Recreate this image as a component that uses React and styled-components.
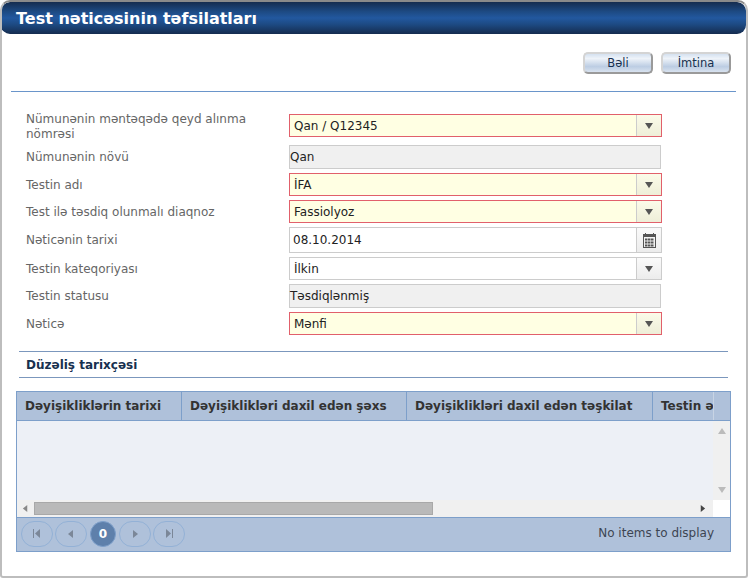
import React from "react";
import styled, { createGlobalStyle } from "styled-components";

const Global = createGlobalStyle`
  html, body { margin: 0; padding: 0; background: #fff; }
  body { font-family: "DejaVu Sans", Verdana, sans-serif; }
`;
const Win = styled.div`
  width: 748px; height: 578px; box-sizing: border-box; background: #fff;
  border-left: 2px solid #bdbdbd; border-right: 2px solid #bdbdbd; border-bottom: 2px solid #bdbdbd;
  border-top: 2px solid #8a8a8a; border-radius: 10px 10px 3px 3px; overflow: hidden; display: flex; flex-direction: column;
`;
const Title = styled.div`
  height: 32px; flex: none; margin: 0 0 0 -1px; padding-left: 15px; display: flex; align-items: center; color: #fff;
  font-size: 16px; font-weight: bold; border-radius: 9px;
  background: linear-gradient(#152c4f 0%, #1d4a83 30%, #22589f 50%, #1d4a83 70%, #152c4f 100%);
`;
const Actions = styled.div`
  display: flex; justify-content: flex-end; gap: 8px; padding: 18px 15px 0 0; height: 24px; flex: none;
`;
const Btn = styled.button`
  width: 70px; height: 22px; padding: 0; border: 2px solid #d4d4d4; border-right-color: #9a9a9a; border-bottom-color: #9a9a9a; border-radius: 5px;
  background: linear-gradient(#d5e1f0 0%, #eef3f9 25%, #bccde3 70%, #d8e2ef 100%);
  color: #17304f; font: 11.5px "DejaVu Sans", sans-serif;
`;
const Rule = styled.div`
  height: 1px; flex: none; margin: 15px 10px 0 9px; background: #6a95ca;
`;
const Form = styled.div`
  display: grid; grid-template-columns: 263px 373px; margin: 18px 0 0 24px; row-gap: 4px; align-items: center; flex: none;
`;
const Label = styled.div`
  font-size: 12px; line-height: 15px; color: #666; padding-right: 4px;
  ${p => p.$multi ? "padding-top: 2px; margin-bottom: -1px;" : "position: relative; top: 0.5px;"}
`;
const Field = styled.div`
  height: ${p => p.$h || 23}px; box-sizing: border-box; display: flex; align-items: stretch;
  width: ${p => p.$ro ? 372 : 373}px;
  border: 1px solid ${p => p.$req ? "#e1606b" : "#ccc"};
  background: ${p => p.$ro ? "#f0f0f0" : p.$req ? "#ffffe3" : "#fff"};
  font-size: 12px; color: #222;
  ${p => p.$first && "align-self: start; margin-top: 4px;"}
`;
const Val = styled.div`
  flex: 1; display: flex; align-items: center; padding-left: ${p => p.$pad ?? 4}px;
`;
const Arrow = styled.div`
  width: 24px; display: flex; align-items: center; justify-content: center;
  border-left: 1px solid #ccc;
  background: ${p => p.$req ? "linear-gradient(#fbfbe9,#eeeed8)" : "linear-gradient(#fafafa,#ececec)"};
`;
const Section = styled.div`
  margin: 16px 18px 0 17px; height: 27px; flex: none; border-top: 1px solid #7b97bd; border-bottom: 1px solid #7b97bd;
  display: flex; align-items: center; padding-left: 7px; box-sizing: border-box; color: #17304f; font-size: 12px; font-weight: bold;
`;
const Grid = styled.div`
  margin: 13px 0 0 14px; width: 715px; height: 161px; box-sizing: border-box; border: 1px solid #7d9fca; flex: none;
  display: flex; flex-direction: column; overflow: hidden;
`;
const Head = styled.div`
  height: 29px; flex: none; box-sizing: border-box; display: flex; background: #afc1da; border-bottom: 1px solid #7d9fca; font-size: 12px; font-weight: bold; color: #333;
`;
const HCell = styled.div`
  width: ${p => p.$w}px; flex: none; box-sizing: border-box; padding-left: 8px; display: flex; align-items: center; white-space: nowrap; overflow: hidden;
  border-right: 1px solid ${p => p.$light ? "#c8d4e4" : "#7d9fca"};
`;
const Body = styled.div`
  flex: 1; display: flex; min-height: 0;
`;
const Left = styled.div`
  flex: 1; display: flex; flex-direction: column;
`;
const Rows = styled.div`
  flex: 1; background: #edf0f6;
`;
const HBar = styled.div`
  height: 17px; flex: none; background: #f0f0f0; display: flex; align-items: center; padding: 0 7px 0 5px; box-sizing: border-box;
`;
const Thumb = styled.div`
  width: 399px; height: 13px; background: #b9b9b9; box-sizing: border-box; border: 1px solid #a8a8a8; margin-left: 5px; margin-right: auto;
`;
const VBar = styled.div`
  width: 17px; flex: none; display: flex; flex-direction: column;
`;
const VTrack = styled.div`
  height: 79px; background: #f0f0f0; display: flex; flex-direction: column; justify-content: space-between; align-items: center; padding: 6px 0; box-sizing: border-box;
`;
const Pager = styled.div`
  height: 34px; flex: none; background: #afc1da; border-top: 1px solid #7d9fca; display: flex; align-items: center; padding: 0 0 2px 4px; gap: 2px; box-sizing: border-box;
`;
const PBtn = styled.div`
  width: 32px; height: 26px; box-sizing: border-box; border: 1px solid #93b1d6; border-radius: 13px; display: flex; align-items: center; justify-content: center;
`;
const PNum = styled.div`
  width: 26px; height: 26px; border-radius: 50%; background: #5e80ab; border: 1px solid #7d9fca; box-sizing: border-box; color: #fff; font-size: 12px; font-weight: bold;
  display: flex; align-items: center; justify-content: center; margin: 0 1px;
`;
const Info = styled.div`
  margin-left: auto; margin-right: 16px; margin-bottom: 2px; font-size: 12px; color: #3d4552;
`;

const Tri = ({ d = "down", c = "#555", s = 8 }) => {
  const p = { down: "0,1 8,1 4,7", up: "0,7 8,7 4,1", left: "6,0 6,8 1,4", right: "2,0 2,8 7,4" }[d];
  return <svg width={s} height={s} viewBox="0 0 8 8"><polygon points={p} fill={c} /></svg>;
};
const Edge = ({ dir }) => (
  <svg width="10" height="9" viewBox="0 0 10 9">
    {dir === "first"
      ? <><rect x="1" y="0" width="1" height="9" fill="#7b8798" /><polygon points="8,0 8,9 3,4.5" fill="#7b8798" /></>
      : <><rect x="8" y="0" width="1" height="9" fill="#7b8798" /><polygon points="2,0 2,9 7,4.5" fill="#7b8798" /></>}
  </svg>
);
const Calendar = () => (
  <svg width="13" height="15" viewBox="0 0 13 15" fill="none">
    <rect x="0.5" y="1.5" width="12" height="13" stroke="#555" />
    <rect x="1" y="2" width="11" height="2" fill="#555" />
    <rect x="2" y="0" width="1" height="2" fill="#555" /><rect x="10" y="0" width="1" height="2" fill="#555" />
    {[5.5, 8.5, 11.5].map(y => [2, 5, 8].map(x => <rect key={x + "-" + y} x={x} y={y} width="2.5" height="2" fill="#555" />))}
  </svg>
);

const Select = ({ value, req, first }) => (
  <Field $req={req} $first={first}>
    <Val>{value}</Val>
    <Arrow $req={req}><Tri /></Arrow>
  </Field>
);

export default function App() {
  return (
    <Win>
      <Global />
      <Title>Test nəticəsinin təfsilatları</Title>
      <Actions><Btn>Bəli</Btn><Btn>İmtina</Btn></Actions>
      <Rule />
      <Form>
        <Label $multi>Nümunənin məntəqədə qeyd alınma nömrəsi</Label>
        <Select value="Qan / Q12345" req first />
        <Label>Nümunənin növü</Label>
        <Field $ro $h={24}><Val $pad={0}>Qan</Val></Field>
        <Label>Testin adı</Label>
        <Select value="İFA" req />
        <Label>Test ilə təsdiq olunmalı diaqnoz</Label>
        <Select value="Fassiolyoz" req />
        <Label>Nəticənin tarixi</Label>
        <Field $h={26}><Val $pad={3}>08.10.2014</Val><Arrow><Calendar /></Arrow></Field>
        <Label>Testin kateqoriyası</Label>
        <Select value="İlkin" />
        <Label>Testin statusu</Label>
        <Field $ro $h={24}><Val $pad={0}>Təsdiqlənmiş</Val></Field>
        <Label>Nəticə</Label>
        <Select value="Mənfi" req />
      </Form>
      <Section>Düzəliş tarixçəsi</Section>
      <Grid>
        <Head>
          <HCell $w={165}>Dəyişikliklərin tarixi</HCell>
          <HCell $w={225}>Dəyişiklikləri daxil edən şəxs</HCell>
          <HCell $w={246}>Dəyişiklikləri daxil edən təşkilat</HCell>
          <HCell $w={61} $light>Testin ə</HCell>
        </Head>
        <Body>
          <Left>
            <Rows />
            <HBar>
              <Tri d="left" c="#888" s={7} />
              <Thumb />
              <Tri d="right" c="#444" s={7} />
            </HBar>
          </Left>
          <VBar>
            <VTrack><Tri d="up" c="#bbb" /><Tri c="#bbb" /></VTrack>
          </VBar>
        </Body>
        <Pager>
          <PBtn><Edge dir="first" /></PBtn>
          <PBtn><Tri d="left" c="#7b8798" /></PBtn>
          <PNum>0</PNum>
          <PBtn><Tri d="right" c="#7b8798" /></PBtn>
          <PBtn><Edge dir="last" /></PBtn>
          <Info>No items to display</Info>
        </Pager>
      </Grid>
    </Win>
  );
}
